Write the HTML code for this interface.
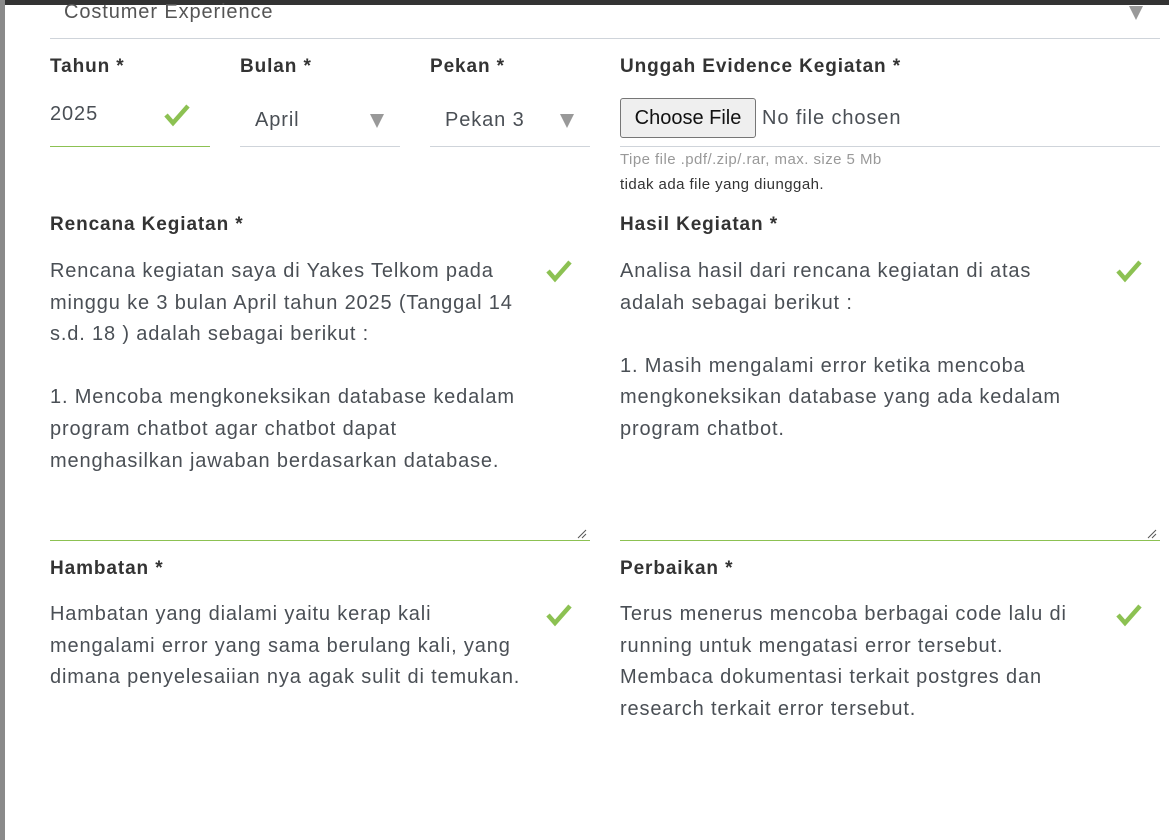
<!DOCTYPE html>
<html><head><meta charset="utf-8"><style>
body{margin:0;width:1169px;height:840px;overflow:hidden;background:#fff;font-family:"Liberation Sans",sans-serif;color:#4a4f55;position:relative}
.a{position:absolute;white-space:nowrap}
.lbl{font-weight:bold;font-size:19px;color:#333;letter-spacing:0.9px}
.t{font-size:20px;line-height:31.6px;white-space:pre;letter-spacing:0.85px}
.v{letter-spacing:0.9px}
.ln{position:absolute;height:1px;background:#cfd4da}
.g{background:#8cc152}
.chk{position:absolute;width:28px;height:24px}
.arr{position:absolute;width:0;height:0;border-left:7px solid transparent;border-right:7px solid transparent;border-top:14px solid #999}
</style></head><body>
<div class="a" style="left:0;top:0;width:1169px;height:5px;background:#333"></div>
<div class="a" style="left:0;top:0;width:5px;height:840px;background:#8a8a8a"></div>
<div class="a v" style="left:64px;top:1px;font-size:20px;color:#555">Costumer Experience</div>
<div class="arr" style="left:1129px;top:6px"></div>
<div class="ln" style="left:50px;top:38px;width:1110px"></div>

<div class="a lbl" style="left:50px;top:56px">Tahun *</div>
<div class="a lbl" style="left:240px;top:56px">Bulan *</div>
<div class="a lbl" style="left:430px;top:56px">Pekan *</div>
<div class="a lbl" style="left:620px;top:56px">Unggah Evidence Kegiatan *</div>

<div class="a v" style="left:50px;top:103px;font-size:20px">2025</div>
<svg class="chk" style="left:163px;top:103px" viewBox="0 0 28 24"><path d="M3 12l7 8L25 3" fill="none" stroke="#8cc152" stroke-width="4.5"/></svg>
<div class="ln g" style="left:50px;top:146px;width:160px"></div>
<div class="a v" style="left:255px;top:109px;font-size:20px">April</div>
<div class="arr" style="left:370px;top:114px"></div>
<div class="ln" style="left:240px;top:146px;width:160px"></div>
<div class="a v" style="left:445px;top:109px;font-size:20px">Pekan 3</div>
<div class="arr" style="left:560px;top:114px"></div>
<div class="ln" style="left:430px;top:146px;width:160px"></div>

<div class="a" style="left:620px;top:98px;width:136px;height:40px;border:1px solid #767676;border-radius:3px;background:#efefef;box-sizing:border-box;font-size:20px;color:#111;text-align:center;line-height:38px">Choose File</div>
<div class="a v" style="left:762px;top:107px;font-size:20px">No file chosen</div>
<div class="ln" style="left:620px;top:146px;width:540px"></div>
<div class="a" style="left:620px;top:151px;font-size:15px;color:#999;letter-spacing:0.45px">Tipe file .pdf/.zip/.rar, max. size 5 Mb</div>
<div class="a" style="left:620px;top:176px;font-size:15px;color:#333;letter-spacing:0.45px">tidak ada file yang diunggah.</div>

<div class="a lbl" style="left:50px;top:214px">Rencana Kegiatan *</div>
<div class="a lbl" style="left:620px;top:214px">Hasil Kegiatan *</div>
<div class="a t" style="left:50px;top:256px">Rencana kegiatan saya di Yakes Telkom pada
minggu ke 3 bulan April tahun 2025 (Tanggal 14
s.d. 18 ) adalah sebagai berikut :

1. Mencoba mengkoneksikan database kedalam
program chatbot agar chatbot dapat
menghasilkan jawaban berdasarkan database.</div>
<div class="a t" style="left:620px;top:256px">Analisa hasil dari rencana kegiatan di atas
adalah sebagai berikut :

1. Masih mengalami error ketika mencoba
mengkoneksikan database yang ada kedalam
program chatbot.</div>
<svg class="chk" style="left:545px;top:259px" viewBox="0 0 28 24"><path d="M3 12l7 8L25 3" fill="none" stroke="#8cc152" stroke-width="4.5"/></svg>
<svg class="chk" style="left:1115px;top:259px" viewBox="0 0 28 24"><path d="M3 12l7 8L25 3" fill="none" stroke="#8cc152" stroke-width="4.5"/></svg>
<svg class="a" style="left:577px;top:529px" width="10" height="10"><path d="M9 1L1 9M9 5L5 9" stroke="#555" stroke-width="1"/></svg>
<svg class="a" style="left:1147px;top:529px" width="10" height="10"><path d="M9 1L1 9M9 5L5 9" stroke="#555" stroke-width="1"/></svg>
<div class="ln g" style="left:50px;top:540px;width:540px"></div>
<div class="ln g" style="left:620px;top:540px;width:540px"></div>

<div class="a lbl" style="left:50px;top:558px">Hambatan *</div>
<div class="a lbl" style="left:620px;top:558px">Perbaikan *</div>
<div class="a t" style="left:50px;top:599px">Hambatan yang dialami yaitu kerap kali
mengalami error yang sama berulang kali, yang
dimana penyelesaiian nya agak sulit di temukan.</div>
<div class="a t" style="left:620px;top:599px">Terus menerus mencoba berbagai code lalu di
running untuk mengatasi error tersebut.
Membaca dokumentasi terkait postgres dan
research terkait error tersebut.</div>
<svg class="chk" style="left:545px;top:603px" viewBox="0 0 28 24"><path d="M3 12l7 8L25 3" fill="none" stroke="#8cc152" stroke-width="4.5"/></svg>
<svg class="chk" style="left:1115px;top:603px" viewBox="0 0 28 24"><path d="M3 12l7 8L25 3" fill="none" stroke="#8cc152" stroke-width="4.5"/></svg>
</body></html>
